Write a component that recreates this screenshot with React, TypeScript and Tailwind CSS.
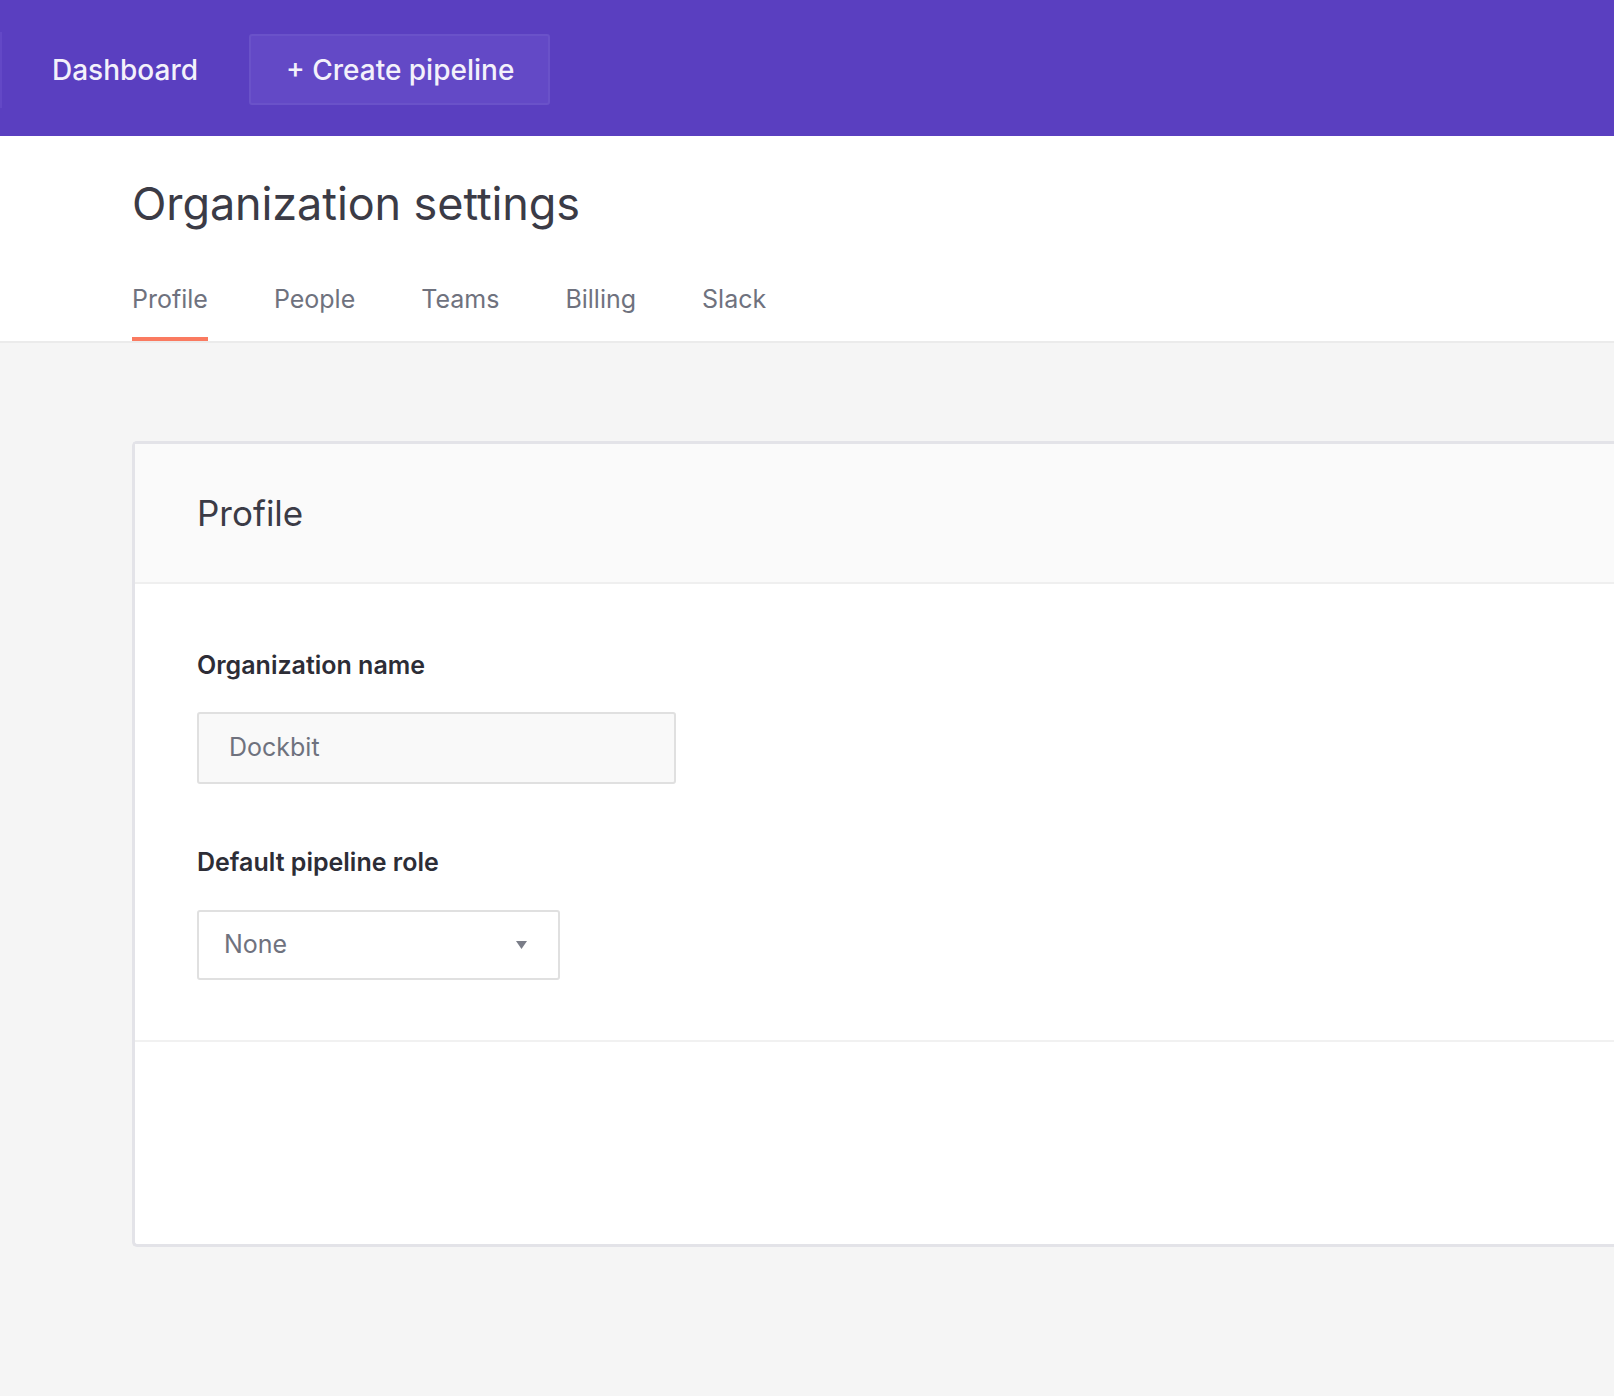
import React from "react";

export default function App() {
  const tabs = ["Profile", "People", "Teams", "Billing", "Slack"];
  return (
    <div className="min-h-[1396px] w-full overflow-hidden bg-[#f5f5f5] font-['Inter',sans-serif]">
      {/* Top nav */}
      <header className="relative flex h-[136px] items-center bg-[#5a3fc0] pl-[52px] pt-[3px]">
        <div className="absolute left-0 top-[32px] h-[76px] w-[2px] bg-[#6348c6]" />
        <span className="text-[28px] font-medium leading-none text-[#f3f1fb]">Dashboard</span>
        <button className="ml-[51px] flex h-[71px] w-[301px] items-center rounded-[3px] border-2 border-[#6a52c9] bg-[#6349c6] pl-[35px] text-[28px] font-medium leading-none text-[#f3f1fb]">
          + Create pipeline
        </button>
      </header>

      {/* Page heading + tabs */}
      <section className="border-b-2 border-[#ebebeb] bg-white pl-[132px]">
        <h1 className="pt-[42px] text-[45px] font-normal leading-[52px] tracking-[-0.1px] text-[#3b3b46]">
          Organization settings
        </h1>
        <nav className="mt-[54px] flex gap-[66px]">
          {tabs.map((t, i) => (
            <div
              key={t}
              className={
                i === 0
                  ? "border-b-[4px] border-[#fa7a60] pb-[22px] text-[25px] leading-[31px] text-[#6f727e]"
                  : "border-b-[4px] border-transparent pb-[22px] text-[25px] leading-[31px] text-[#6f727e]"
              }
            >
              {t}
            </div>
          ))}
        </nav>
      </section>

      {/* Card */}
      <div className="pl-[132px] pt-[98px]">
        <div className="h-[806px] rounded-l-[5px] border-y-[3px] border-l-[3px] border-[#e3e3e8] bg-white">
          <div className="flex h-[140px] items-center border-b-2 border-[#efefef] bg-[#fafafa] pl-[62px]">
            <h2 className="text-[35px] font-normal leading-none text-[#3b3b46]">Profile</h2>
          </div>
          <div className="border-b-2 border-[#f1f1f1] pb-[60px] pl-[62px] pt-[65px]">
            <label className="block text-[25px] font-semibold leading-[32px] text-[#2d2d36]">
              Organization name
            </label>
            <div className="mt-[31px] flex h-[72px] w-[479px] items-center rounded-[3px] border-2 border-[#e0e0e0] bg-[#f9f9f9] pl-[30px] text-[25px] text-[#6f727e]">
              Dockbit
            </div>
            <label className="mt-[62px] block text-[25px] font-semibold leading-[32px] text-[#2d2d36]">
              Default pipeline role
            </label>
            <div className="mt-[32px] flex h-[70px] w-[363px] items-center justify-between rounded-[3px] border-2 border-[#e0e0e0] bg-white pl-[25px] pr-[31px] text-[25px] text-[#6f727e]">
              <span>None</span>
              <svg width="11" height="8" viewBox="0 0 11 8">
                <polygon points="0,0 11,0 5.5,8" fill="#7a7d88" />
              </svg>
            </div>
          </div>
        </div>
      </div>
    </div>
  );
}
